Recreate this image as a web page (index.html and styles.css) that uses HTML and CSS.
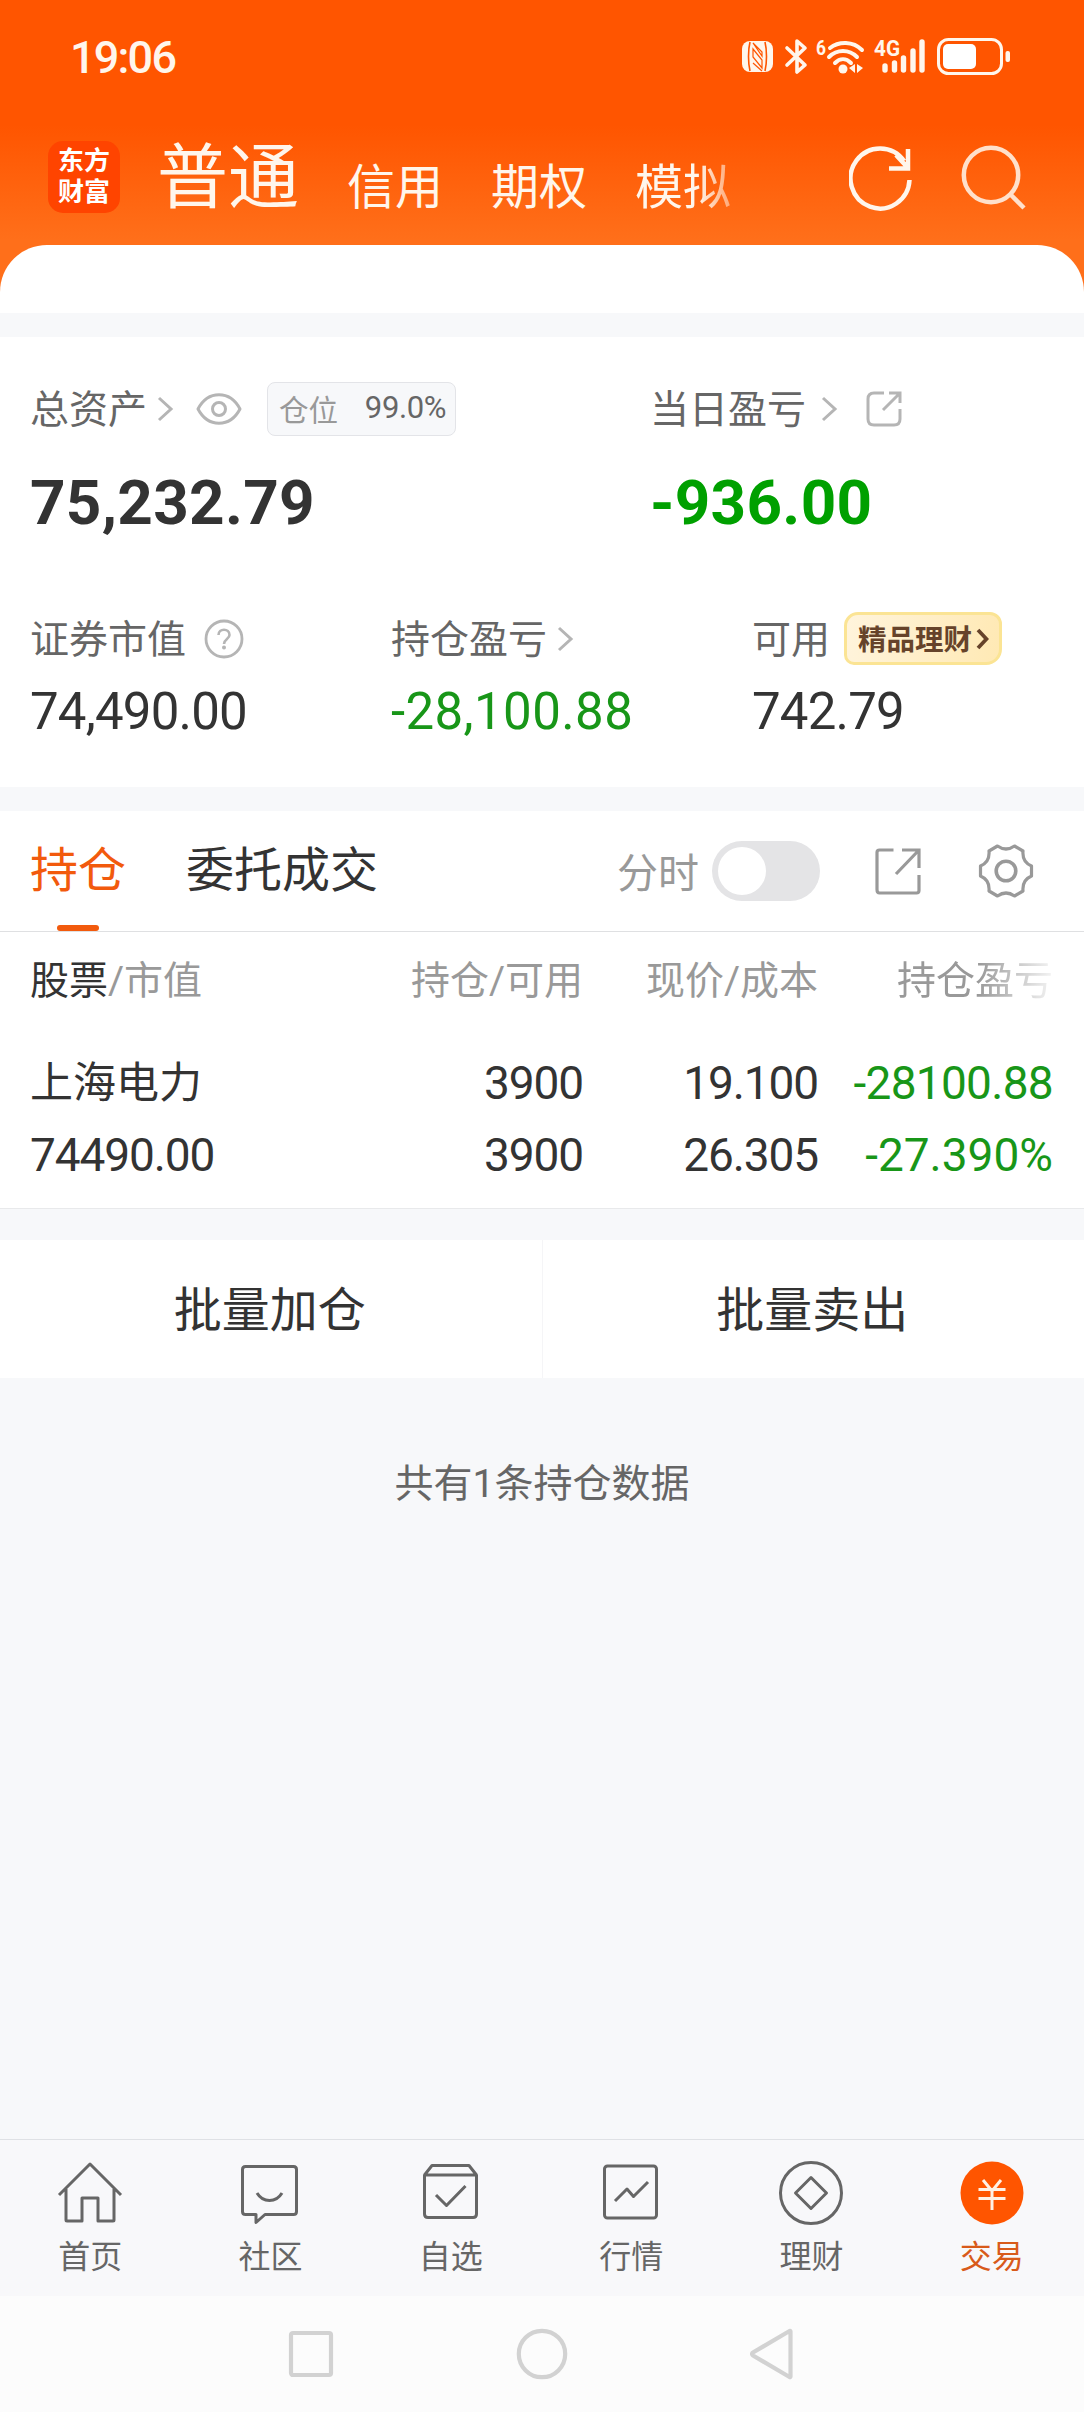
FILE: index.html
```html
<!DOCTYPE html>
<html lang="zh-CN">
<head>
  <meta charset="UTF-8">
  <meta name="viewport" content="width=device-width, initial-scale=1.0">
  <title>东方财富 - 交易</title>
  <link rel="stylesheet" href="styles.css">
</head>
<body>
  <div class="app">
    <header class="header">
      <!-- Status bar -->
      <div class="status-bar">
        <span class="time">19:06</span>
        <svg class="status-icons" width="270" height="40" viewBox="0 0 270 40" fill="none">
          <!-- NFC -->
          <rect x="0" y="5" width="31" height="31" rx="8" fill="#fff6ec"/>
          <path d="M8 6C6 14 6 27 8 35M23 6c2 8 2 21 0 29" stroke="#ff5500" stroke-width="1.600"/>
          <path d="M11 13L20 24V32L11 21zM11 7l9 9v4zM11 27l9 8z" stroke="#ff5500" stroke-width="1.200"/>
          <!-- Bluetooth -->
          <path d="M45 12l18 17-8 7V5l8 7L45 29" stroke="#fff6ec" stroke-width="3.6" stroke-linejoin="round" stroke-linecap="round"/>
          <!-- Wi-Fi -->
          <text class="status-text" x="74" y="19" font-size="21" textLength="10" lengthAdjust="spacingAndGlyphs">6</text>
          <g stroke="#fff6ec" stroke-width="4" stroke-linecap="round">
            <path d="M88 12c9-7 23-7 32 2"/>
            <path d="M87 21c8-8 20-8 28 0"/>
            <path d="M93 27c5-5 11-5 16 0"/>
          </g>
          <circle cx="101" cy="33" r="4.5" fill="#fff6ec"/>
          <path d="M113 28v9l-6-5zM115 28v9l6-5z" fill="#fff6ec"/>
          <!-- Signal -->
          <text class="status-text" x="132" y="20" font-size="22" textLength="26" lengthAdjust="spacingAndGlyphs">4G</text>
          <path d="M143 30v4M152.500 27v7M161.500 22v12M171 15v19M180 6v28" stroke="#fff6ec" stroke-width="5.400" stroke-linecap="round"/>
          <!-- Battery -->
          <rect x="196.500" y="3.500" width="63" height="34" rx="10" stroke="#fff6ec" stroke-width="3"/>
          <rect x="201" y="8" width="33" height="25" rx="5" fill="#fff"/>
          <rect x="263.500" y="15" width="4.500" height="11" rx="2" fill="#fff6ec"/>
        </svg>
      </div>

      <!-- Account switch -->
      <div class="account-bar">
        <div class="logo"><span>东方</span><span>财富</span></div>
        <nav class="accounts">
          <span class="account current">普通</span>
          <span class="account">信用</span>
          <span class="account">期权</span>
          <span class="account fade">模拟</span>
        </nav>
        <svg class="refresh" width="64" height="66" viewBox="0 0 64 66" fill="none" stroke="#fff6ec" stroke-width="4.500">
          <path d="M60.500 35A29.500 30 0 1 1 55 16M59 4v19.500H40M47 10l12 13"/>
        </svg>
        <svg class="search" width="66" height="66" viewBox="0 0 66 66" fill="none" stroke="#ffe0cb" stroke-width="4.500">
          <circle cx="30" cy="31" r="27.200"/>
          <path d="M49 50l14 14"/>
        </svg>
      </div>
    </header>

    <div class="sheet-top"></div>

    <!-- Assets -->
    <section class="assets">
      <div class="asset-row">
        <div class="asset total">
          <div class="asset-label">
            <span class="label-text">总资产</span>
            <svg class="chevron near" width="17" height="26" viewBox="0 0 17 26"><path d="M2 2l12 11L2 24"/></svg>
            <svg class="eye" width="46" height="32" viewBox="0 0 46 32" fill="none" stroke="#b5b5b5" stroke-width="3">
              <path d="M2 16C12-3 34-3 44 16C34 35 12 35 2 16z" stroke-linejoin="round"/>
              <circle cx="23" cy="16" r="6.500"/>
            </svg>
            <span class="position">仓位 <b>99.0%</b></span>
          </div>
          <div class="asset-value large">75,232.79</div>
        </div>
        <div class="asset">
          <div class="asset-label">
            <span class="label-text">当日盈亏</span>
            <svg class="chevron far" width="17" height="26" viewBox="0 0 17 26"><path d="M2 2l12 11L2 24"/></svg>
            <svg class="share" width="36" height="36" viewBox="0 0 36 36" fill="none" stroke="#b5b5b5" stroke-width="3">
              <path d="M18 2H8Q2 2 2 8v20q0 6 6 6h20q6 0 6-6V18M23 2h11v10M34 2L17 19"/>
            </svg>
          </div>
          <div class="asset-value large loss">-936.00</div>
        </div>
      </div>
      <div class="asset-row second">
        <div class="asset">
          <div class="asset-label">
            <span class="label-text">证券市值</span>
            <svg class="help" width="40" height="40" viewBox="0 0 40 40" fill="none" stroke="#b5b5b5">
              <circle cx="20" cy="20" r="18" stroke-width="2.800"/>
              <path d="M14.500 16c0-7 11-7 11 0c0 4-5.500 4-5.500 9" stroke-width="2.600"/>
              <circle cx="20" cy="28.500" r="1" stroke-width="2"/>
            </svg>
          </div>
          <div class="asset-value">74,490.00</div>
        </div>
        <div class="asset">
          <div class="asset-label">
            <span class="label-text">持仓盈亏</span>
            <svg class="chevron near" width="17" height="26" viewBox="0 0 17 26"><path d="M2 2l12 11L2 24"/></svg>
          </div>
          <div class="asset-value loss wide">-28,100.88</div>
        </div>
        <div class="asset">
          <div class="asset-label">
            <span class="label-text">可用</span>
            <span class="promo">
              <span>精品理财</span>
              <svg width="13" height="22" viewBox="0 0 13 22"><path d="M2 2l8.500 9L2 20"/></svg>
            </span>
          </div>
          <div class="asset-value">742.79</div>
        </div>
      </div>
    </section>

    <!-- Holdings -->
    <section class="holdings">
      <div class="tabs">
        <span class="tab active">持仓</span>
        <span class="tab">委托成交</span>
        <div class="tools">
          <span class="tool-label">分时</span>
          <span class="toggle"></span>
          <svg class="open" width="46" height="48" viewBox="0 0 46 48" fill="none" stroke="#999" stroke-width="3.200">
            <path d="M18.500 3H4.500Q2 3 2 5.500v37Q2 46 4.500 46h37q2.500 0 2.500-2.500V28M27 3h17v18M44 3L21 27"/>
          </svg>
          <svg class="gear" width="56" height="54" viewBox="0 0 56 54" fill="none" stroke="#999" stroke-width="3.200" stroke-linejoin="round">
            <path d="M19.500 2Q28 8 36.500 2L45 7Q44 18 53.500 22V32Q44 36 45 47L36.500 52Q28 46 19.500 52L11 47Q12 36 2.500 32V22Q12 18 11 7z"/>
            <circle cx="28" cy="27" r="9.800" stroke-width="3.600"/>
          </svg>
        </div>
      </div>

      <div class="grid table-head">
        <span><em>股票</em>/市值</span>
        <span>持仓/可用</span>
        <span>现价/成本</span>
        <span class="clipped">持仓盈亏</span>
      </div>

      <div class="grid table-row">
        <span class="name">上海电力</span>
        <span>3900</span>
        <span>19.100</span>
        <span class="loss">-28100.88</span>
        <span>74490.00</span>
        <span>3900</span>
        <span>26.305</span>
        <span class="loss percent">-27.390%</span>
      </div>
    </section>

    <div class="actions">
      <button class="action">批量加仓</button>
      <button class="action">批量卖出</button>
    </div>

    <p class="summary">共有1条持仓数据</p>

    <!-- Bottom tabs -->
    <footer class="tabbar">
      <a class="tabbar-item">
        <svg width="66" height="68" viewBox="0 0 66 68">
          <path d="M2 36L33 5l31 31M9 30v31q0 1 1 1h15V39h16v23h15q1 0 1-1V30"/>
        </svg>
        首页
      </a>
      <a class="tabbar-item">
        <svg width="66" height="68" viewBox="0 0 66 68">
          <path d="M8.500 7.500h48q3 0 3 3v42q0 3-3 3H28l-9 8v-8H8.500q-3 0-3-3v-42q0-3 3-3z"/>
          <path d="M20 34c6 10 19 10 25 0"/>
        </svg>
        社区
      </a>
      <a class="tabbar-item">
        <svg width="66" height="68" viewBox="0 0 66 68">
          <path d="M6.500 16h52v39q0 3.500-3.500 3.500H10q-3.500 0-3.500-3.500zL14 6.500h37L58.500 16M18 36l10.500 10.500L47.500 27"/>
        </svg>
        自选
      </a>
      <a class="tabbar-item">
        <svg width="66" height="68" viewBox="0 0 66 68">
          <rect x="6.500" y="7" width="52" height="52" rx="3"/>
          <path d="M17 42l12-12 6.500 7.500L50 23"/>
        </svg>
        行情
      </a>
      <a class="tabbar-item">
        <svg width="66" height="68" viewBox="0 0 66 68">
          <circle cx="33" cy="34" r="30.500"/>
          <path d="M33 18.500L48.500 34L33 49.500L17.500 34z"/>
        </svg>
        理财
      </a>
      <a class="tabbar-item active">
        <svg width="66" height="68" viewBox="0 0 66 68">
          <circle class="coin" cx="33" cy="34" r="31.500"/>
          <path class="yen" d="M24 21l9 11 9-11M19.500 30.500h27M19.500 39.500h27M33 32v19"/>
        </svg>
        交易
      </a>
    </footer>

    <!-- System navigation -->
    <div class="system-nav">
      <svg width="46" height="52" viewBox="0 0 46 52"><rect x="3" y="5" width="40" height="42" rx="2"/></svg>
      <svg width="52" height="52" viewBox="0 0 52 52"><circle cx="26" cy="26" r="23.200"/></svg>
      <svg width="46" height="52" viewBox="0 0 46 52"><path d="M40.500 3.500v45q0 1-1 .5L3 27.500q-2-1.500 0-3L39.500 3q1-.5 1 .5z"/></svg>
    </div>
  </div>
</body>
</html>
```
FILE: styles.css
```css
/* Base styles */
* {
  box-sizing: border-box;
}

body {
  margin: 0;
  font-family: Roboto, "Noto Sans CJK SC", sans-serif;
  color: #333;
  background: #f7f8fa;
}

svg {
  flex: none;
  display: block;
}

.app {
  display: flex;
  flex-direction: column;
  height: 2412px;
}

/* Header */
.header {
  height: 295px;
  flex: none;
  background: linear-gradient(#ff5500 125px, #ff6f1a 240px);
}

.status-bar {
  display: flex;
  justify-content: space-between;
  align-items: center;
  height: 114px;
  padding: 0 72px 0 70px;
}

.time {
  font-size: 45px;
  font-weight: 500;
  letter-spacing: -1.8px;
  color: #fff6ec;
}

.status-icons {
  margin-top: -3px;
}

.status-text {
  font-family: Roboto, sans-serif;
  font-weight: 700;
  fill: #fff6ec;
}

.account-bar {
  display: flex;
  align-items: center;
  height: 126px;
  padding: 0 57px 0 48px;
}

.logo {
  display: flex;
  flex-direction: column;
  justify-content: center;
  width: 72px;
  height: 72px;
  border-radius: 15px;
  background: #ff4400;
  color: #fff;
  font-size: 26px;
  font-weight: 700;
  line-height: 31px;
  text-align: center;
}

.accounts {
  display: flex;
  align-items: flex-end;
  gap: 48px;
  margin-left: 37px;
  color: #fff6ec;
}

.account {
  padding-top: 22px;
  font-size: 48px;
  line-height: 80px;
}

.account.current {
  padding: 0 0 10px;
  font-size: 71px;
}

.account.fade {
  -webkit-mask-image: linear-gradient(to right, #000 65%, rgba(0, 0, 0, 0.45));
  mask-image: linear-gradient(to right, #000 65%, rgba(0, 0, 0, 0.45));
}

.refresh {
  margin-top: 2px;
  margin-left: auto;
}

.search {
  margin-left: 48px;
}

.sheet-top {
  height: 68px;
  flex: none;
  margin-top: -50px;
  border-radius: 47px 47px 0 0;
  background: #fff;
}

/* Assets */
.assets {
  height: 450px;
  flex: none;
  margin-top: 24px;
  padding: 45px 30px 0;
  background: #fff;
}

.asset-row {
  display: grid;
  grid-template-columns: 620px 1fr;
}

.asset-row.second {
  grid-template-columns: 361px 361px 1fr;
  margin-top: 74px;
}

.asset-label {
  display: flex;
  align-items: center;
  height: 54px;
  font-size: 39px;
  color: #666;
  white-space: nowrap;
}

.label-text {
  margin-bottom: 6px;
}

.second .asset-label {
  height: 53px;
}

.asset-value {
  margin-top: 17px;
  font-size: 51px;
  line-height: 60px;
  letter-spacing: -0.8px;
}

.asset-value.wide {
  letter-spacing: 0.4px;
}

.asset-value.large {
  margin-top: 32px;
  font-size: 62px;
  font-weight: 700;
  line-height: 70px;
  letter-spacing: 0.3px;
}

.asset-value.loss {
  color: #189618;
}

.asset-value.large.loss {
  color: #00a000;
}

.chevron {
  fill: none;
  stroke: #b5b5b5;
  stroke-width: 3;
}

.chevron.near {
  margin-left: 10px;
}

.chevron.far {
  margin-left: 15px;
}

.eye {
  margin-left: 22px;
}

.position {
  display: flex;
  align-items: center;
  justify-content: space-between;
  width: 189px;
  height: 54px;
  margin-left: 25px;
  padding: 0 9px 3px 11px;
  border: 1px solid #e3e4e8;
  border-radius: 8px;
  background: #f7f8fa;
  font-size: 29.5px;
  color: #999;
}

.position b {
  font-size: 31px;
  font-weight: 400;
  letter-spacing: -0.4px;
  color: #666;
}

.share {
  margin-left: 28px;
}

.help {
  margin-left: 18px;
}

.promo {
  display: flex;
  align-items: center;
  gap: 4px;
  width: 158px;
  height: 53px;
  margin-left: 14px;
  padding-left: 11px;
  border: 3px solid #fbe494;
  border-radius: 14px 12px 16px 10px;
  background: linear-gradient(100deg, #fff4dc, #ffe9b4);
  font-size: 28.5px;
  font-weight: 700;
  color: #66432a;
}

.promo span {
  margin-bottom: 3px;
}

.promo svg {
  fill: none;
  stroke: #66432a;
  stroke-width: 3.8;
}

/* Holdings */
.holdings {
  height: 398px;
  flex: none;
  margin-top: 24px;
  border-bottom: 1px solid #e8e9eb;
  background: #fff;
}

.tabs {
  display: flex;
  align-items: center;
  height: 121px;
  padding: 0 50px 0 30px;
  border-bottom: 1px solid #dfe0e2;
}

.tab {
  position: relative;
  margin-right: 60px;
  font-size: 48px;
  line-height: 120px;
}

.tab.active {
  color: #f25a0d;
}

.tab.active::after {
  content: "";
  position: absolute;
  left: 27px;
  bottom: 0;
  width: 42px;
  height: 6px;
  border-radius: 3px;
  background: #f25a0d;
}

.tools {
  display: flex;
  align-items: center;
  margin-left: auto;
}

.tool-label {
  margin-bottom: 3px;
  font-size: 41px;
  color: #999;
}

.toggle {
  width: 108px;
  height: 60px;
  margin: 0 55px 0 13px;
  padding: 6px;
  border-radius: 30px;
  background: #e4e4e6;
}

.toggle::before {
  content: "";
  display: block;
  width: 48px;
  height: 48px;
  border-radius: 50%;
  background: #fff;
}

.gear {
  margin-left: 57px;
}

.grid {
  display: grid;
  grid-template-columns: 200px 1fr 235px 235px;
  padding: 0 31px 0 30px;
  text-align: right;
  white-space: nowrap;
}

.grid > :nth-child(4n + 1) {
  text-align: left;
}

.table-head {
  padding-top: 24px;
  font-size: 39px;
  line-height: 50px;
  color: #999;
}

.table-head em {
  font-style: normal;
  color: #333;
}

.clipped {
  -webkit-mask-image: linear-gradient(to right, #000 68%, rgba(0, 0, 0, 0.1));
  mask-image: linear-gradient(to right, #000 68%, rgba(0, 0, 0, 0.1));
}

.table-row {
  padding-top: 41px;
  font-size: 46px;
  line-height: 72px;
  letter-spacing: -1.1px;
}

.table-row .name {
  font-size: 43px;
  letter-spacing: 0;
}

.table-row .loss {
  color: #189618;
  letter-spacing: -0.7px;
}

.table-row .loss.percent {
  letter-spacing: 0;
}

/* Batch actions */
.actions {
  display: flex;
  height: 138px;
  flex: none;
  margin-top: 31px;
  background: #fff;
}

.action {
  flex: 1;
  padding: 0 2px 6px 0;
  border: 0;
  background: none;
  font: inherit;
  font-size: 48px;
  color: #333;
}

.action + .action {
  border-left: 1px solid #f5f5f7;
}

.summary {
  flex: 1;
  margin: 0;
  padding-top: 76px;
  font-size: 39px;
  line-height: 60px;
  text-align: center;
  color: #666;
}

/* Bottom tabs */
.tabbar {
  display: flex;
  height: 157px;
  flex: none;
  padding-right: 2px;
  border-top: 1px solid #dfe1e5;
  background: #f8f8fa;
}

.tabbar-item {
  display: flex;
  flex: 1;
  flex-direction: column;
  align-items: center;
  padding-top: 19px;
  font-size: 32px;
  line-height: 60px;
  color: #666;
}

.tabbar-item svg {
  fill: none;
  stroke: #666;
  stroke-width: 3;
  stroke-linejoin: round;
}

.tabbar-item.active {
  color: #d85a1a;
}

.tabbar-item .coin {
  fill: #ff5500;
  stroke: none;
}

.tabbar-item .yen {
  stroke: #fff1e5;
}

/* System navigation */
.system-nav {
  display: flex;
  justify-content: center;
  align-items: center;
  gap: 182px;
  height: 116px;
  flex: none;
  background: #fcfcfc;
}

.system-nav svg {
  fill: none;
  stroke: #d2d2d2;
  stroke-width: 4.2;
}
```
